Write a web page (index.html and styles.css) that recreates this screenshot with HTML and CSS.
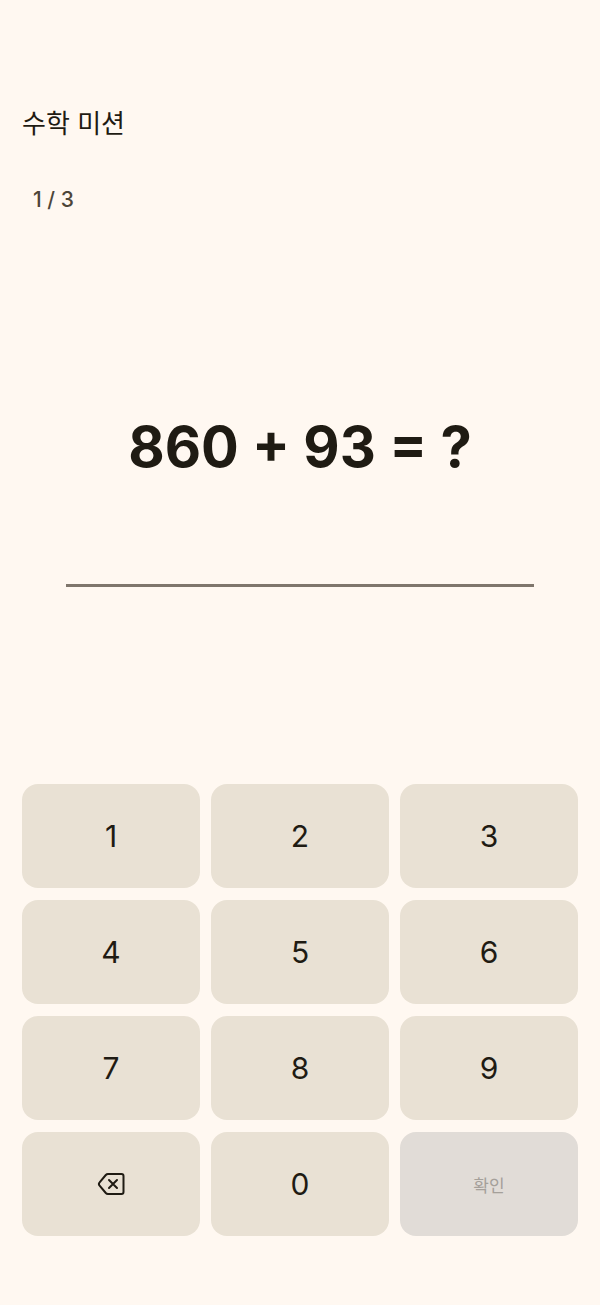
FILE: index.html
```html
<!DOCTYPE html>
<html lang="ko">
<head>
    <meta charset="UTF-8">
    <meta name="viewport" content="width=device-width, initial-scale=1.0">
    <title>수학 미션</title>
    <link rel="stylesheet" href="styles.css">
</head>
<body>
    <header class="app-bar">
        <h1>수학 미션</h1>
    </header>

    <main class="mission">
        <p class="progress">1 / 3</p>

        <div class="problem">
            <label class="question" for="answer">860 + 93 = ?</label>
            <input class="answer" id="answer" type="text" inputmode="none" autocomplete="off">
        </div>

        <div class="keypad">
            <button type="button" class="key">1</button>
            <button type="button" class="key">2</button>
            <button type="button" class="key">3</button>
            <button type="button" class="key">4</button>
            <button type="button" class="key">5</button>
            <button type="button" class="key">6</button>
            <button type="button" class="key">7</button>
            <button type="button" class="key">8</button>
            <button type="button" class="key">9</button>
            <button type="button" class="key" aria-label="지우기">
                <svg class="icon" viewBox="0 0 28 28" aria-hidden="true">
                    <path d="M11 4H24.500a2 2 0 0 1 2 2v16a2 2 0 0 1-2 2H11a3 3 0 0 1-2.200-1L2.600 15.600a2.400 2.400 0 0 1 0-3.200L8.800 5A3 3 0 0 1 11 4z"/>
                    <path d="M12 10l8 8M20 10l-8 8"/>
                </svg>
            </button>
            <button type="button" class="key">0</button>
            <button type="button" class="key key-submit" disabled>확인</button>
        </div>
    </main>
</body>
</html>
```

FILE: styles.css
```css
* {
    box-sizing: border-box;
    font-family: Inter, 'Noto Sans CJK KR', sans-serif;
}

body {
    margin: 0;
    min-height: 100vh;
    display: flex;
    flex-direction: column;
    padding: 88px 22px 69px;
    background: #fff8f1;
    color: #1f1b13;
}

.app-bar {
    display: flex;
    align-items: center;
    height: 72px;
}

h1 {
    margin: 0;
    font-size: 26px;
    line-height: 36px;
    font-weight: 400;
}

.mission {
    flex: 1;
    display: flex;
    flex-direction: column;
}

.progress {
    margin: 26px 11px 0;
    font-size: 21px;
    line-height: 28px;
    font-weight: 500;
    color: #4d4639;
}

.problem {
    flex: 1;
    display: flex;
    flex-direction: column;
    align-items: center;
    justify-content: center;
    padding: 0 44px;
}

.question {
    font-size: 56px;
    line-height: 72px;
    font-weight: 700;
    white-space: nowrap;
}

.answer {
    width: 100%;
    height: 104px;
    padding: 0;
    border: none;
    border-bottom: 3px solid #7f766c;
    background: transparent;
    font-size: 48px;
    text-align: center;
    color: inherit;
    outline: none;
}

.keypad {
    display: grid;
    grid-template-columns: repeat(3, 1fr);
    gap: 12px 11px;
}

.key {
    display: flex;
    align-items: center;
    justify-content: center;
    height: 104px;
    padding: 0;
    border: none;
    border-radius: 16px;
    background: #e9e1d4;
    color: #1f1b13;
    font-size: 30px;
    cursor: pointer;
}

.key-submit:disabled {
    background: #e1dcd7;
    color: #a5a09a;
    font-size: 17px;
    cursor: default;
}

.icon {
    width: 28px;
    height: 28px;
    fill: none;
    stroke: currentColor;
    stroke-width: 2;
    stroke-linecap: round;
    stroke-linejoin: round;
}
```
